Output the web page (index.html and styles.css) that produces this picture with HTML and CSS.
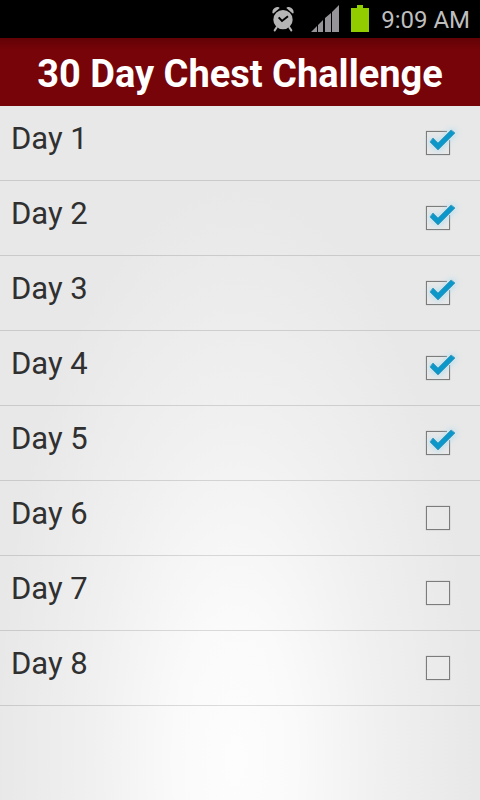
FILE: index.html
```html
<!DOCTYPE html>
<html lang="en">
<head>
<meta charset="utf-8">
<meta name="viewport" content="width=device-width, initial-scale=1">
<title>30 Day Chest Challenge</title>
<link rel="stylesheet" href="styles.css">
</head>
<body>
<svg class="defs" width="0" height="0" aria-hidden="true">
  <symbol id="mark" viewBox="0 0 60 44">
    <path class="gap" d="M37 11H41M40 17V20"/>
    <path class="glow" d="M19 22L23 18L28 23L42 9L46 13L28 31Z"/>
    <path class="check" d="M20 22L23 18L28 23L41 10L45 13L28 30Z"/>
  </symbol>
</svg>
<div class="status">
  <svg class="alarm" width="24" height="26" viewBox="0 0 72 78" aria-hidden="true">
    <path d="M4 20Q4 6 18 3Q24 2 26 6L8 22Q5 23 4 20ZM68 20Q68 6 54 3Q48 2 46 6L64 22Q67 23 68 20Z"/>
    <path d="M17 64L11 73M55 64L61 73" stroke="#b5b5b5" stroke-width="6" stroke-linecap="round"/>
    <circle cx="36" cy="41" r="29"/>
    <path class="hands" d="M23 34L33 45L51 31"/>
  </svg>
  <svg class="signal" width="28" height="27" viewBox="0 0 28 27" aria-hidden="true">
    <path d="M0 27L6 21V27ZM7 20L12 15V27H7ZM14 13L20 8V27H14ZM21 7L28 0V27H21Z"/>
  </svg>
  <svg class="battery" width="18" height="27" viewBox="0 0 18 27" aria-hidden="true">
    <path d="M6 0H12V3H18V27H0V3H6Z"/>
  </svg>
  <time class="clock">9:09 AM</time>
</div>
<header class="title"><h1>30 Day Chest Challenge</h1></header>
<main>
  <ul class="days">
    <li><label class="day"><span>Day 1</span><span class="tick"><input type="checkbox" checked><svg class="mark" aria-hidden="true"><use href="#mark"/></svg></span></label></li>
    <li><label class="day"><span>Day 2</span><span class="tick"><input type="checkbox" checked><svg class="mark" aria-hidden="true"><use href="#mark"/></svg></span></label></li>
    <li><label class="day"><span>Day 3</span><span class="tick"><input type="checkbox" checked><svg class="mark" aria-hidden="true"><use href="#mark"/></svg></span></label></li>
    <li><label class="day"><span>Day 4</span><span class="tick"><input type="checkbox" checked><svg class="mark" aria-hidden="true"><use href="#mark"/></svg></span></label></li>
    <li><label class="day"><span>Day 5</span><span class="tick"><input type="checkbox" checked><svg class="mark" aria-hidden="true"><use href="#mark"/></svg></span></label></li>
    <li><label class="day"><span>Day 6</span><span class="tick"><input type="checkbox"><svg class="mark" aria-hidden="true"><use href="#mark"/></svg></span></label></li>
    <li><label class="day"><span>Day 7</span><span class="tick"><input type="checkbox"><svg class="mark" aria-hidden="true"><use href="#mark"/></svg></span></label></li>
    <li><label class="day"><span>Day 8</span><span class="tick"><input type="checkbox"><svg class="mark" aria-hidden="true"><use href="#mark"/></svg></span></label></li>
  </ul>
</main>
</body>
</html>
```
FILE: styles.css
```css
* {
  box-sizing: border-box;
}

body {
  margin: 0;
  min-height: 100vh;
  font-family: Roboto, "Liberation Sans", sans-serif;
  color: #303030;
  background: radial-gradient(ellipse 50% 72% at 49% 95%, #fdfdfd, #fafafa 25%, #f0f0f0 60%, #e8e8e8) #e8e8e8;
}

.defs {
  position: absolute;
}

.status {
  display: flex;
  justify-content: flex-end;
  align-items: flex-end;
  height: 38px;
  padding: 0 10px 6px;
  background: #000;
}

.alarm {
  margin-right: 16px;
  fill: #b5b5b5;
}

.hands {
  fill: none;
  stroke: #000;
  stroke-width: 6;
}

.signal {
  margin-right: 12px;
  fill: #969499;
}

.battery {
  margin-right: 12px;
  fill: #92cd00;
}

.clock {
  font-size: 24px;
  line-height: 24px;
  color: #bebebe;
}

.title {
  padding: 14px 8px 10px;
  text-align: center;
  color: #fff;
  background: linear-gradient(#620205, #760408 12px);
}

.title h1 {
  margin: 0;
  font-size: 38px;
  line-height: 44px;
  font-weight: 700;
}

.days {
  margin: 0;
  padding: 0;
  list-style: none;
}

.day {
  display: flex;
  justify-content: space-between;
  height: 75px;
  padding: 14px 10px 0 11px;
  border-bottom: 1px solid rgba(0, 0, 0, 0.13);
  font-size: 31px;
  line-height: 38px;
}

.tick {
  display: grid;
  width: 60px;
  height: 44px;
}

.tick input {
  grid-area: 1 / 1;
  appearance: none;
  width: 24px;
  height: 24px;
  margin: 11px 0 0 16px;
  border: 1px solid #7c7c7c;
  box-shadow: 0 0 1px #a0a0a0;
}

.mark {
  grid-area: 1 / 1;
  width: 60px;
  height: 44px;
  visibility: hidden;
  pointer-events: none;
}

.tick input:checked + .mark {
  visibility: visible;
}

.gap {
  fill: none;
  stroke: #e8e8e8;
  stroke-width: 3;
}

.glow {
  fill: #9fdcf4;
  filter: blur(3px);
}

.check {
  fill: #0c97cb;
  stroke: #4a9fbc;
}
```
